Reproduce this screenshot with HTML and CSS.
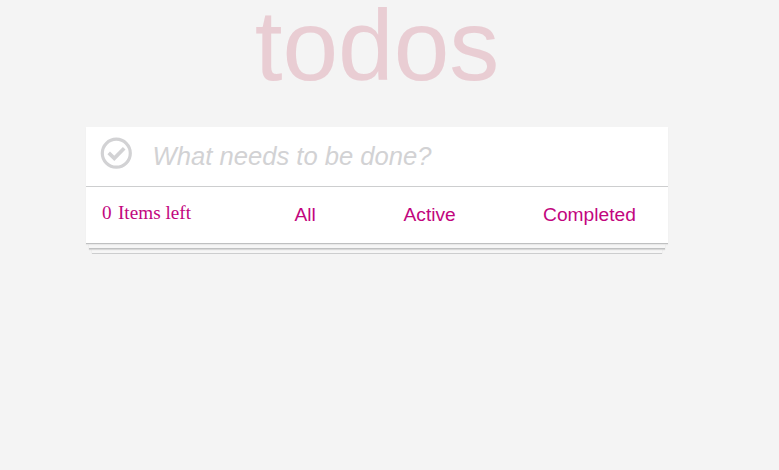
FILE: index.html
```html
<!DOCTYPE html>
<html lang="en">
<head>
<meta charset="utf-8">
<title>todos</title>
<link rel="stylesheet" href="styles.css">
</head>
<body>
<main class="app">
  <h1 class="title">todos</h1>
  <section class="card">
    <div class="entry">
      <svg class="check" viewBox="0 0 32 32" aria-hidden="true"><circle cx="16.3" cy="16.2" r="14"/><path class="tick" d="M8.7 15.9l5.6 5.4L24.2 11.2"/></svg>
      <input class="field" type="text" placeholder="What needs to be done?">
    </div>
    <footer class="filters">
      <span class="count"><span>0</span><span>Items left</span></span>
      <a class="all">All</a>
      <a class="active">Active</a>
      <a class="completed">Completed</a>
    </footer>
  </section>
  <div class="sheet"></div>
  <div class="sheet sheet-last"></div>
</main>
</body>
</html>
```

FILE: styles.css
```css
* { box-sizing: border-box; }
body { margin: 0; background: #f4f4f4; font-family: "Liberation Sans", Arial, sans-serif; }
.app { width: 582px; margin-left: 86px; }
.title { margin: 0; height: 127px; line-height: 90px; font-size: 100px; font-weight: 400; text-align: center; color: #e9cdd3; }
.card { position: relative; z-index: 2; background: #fff; height: 117px; border-bottom: 1px solid #bfc0c1; box-shadow: 0 1px 1px rgba(0,0,0,.05); }
.entry { display: flex; height: 60px; border-bottom: 1px solid #cdcecf; padding-left: 14px; }
.check { width: 32px; height: 32px; margin-top: 10px; fill: none; stroke: #d2d2d4; stroke-width: 3.2; }
.tick { stroke-width: 3.7; }
.field { flex: 1; min-width: 0; border: 0; outline: 0; padding: 0; margin-left: 20.6px; background: none; font: italic 25.6px "Liberation Sans", Arial, sans-serif; }
.field::placeholder { color: #d2d2d4; opacity: 1; }
.filters { display: flex; height: 56px; line-height: 56px; font-size: 19.2px; color: #c2067e; }
.count { display: flex; gap: 6.4px; width: 192.5px; margin-left: 16px; line-height: 52px; font-family: "Liberation Serif", serif; }
.all { width: 109px; }
.active { width: 139.6px; }
.sheet { position: relative; z-index: 1; height: 5px; margin: 0 3px; border-bottom: 1px solid #c0c1c2; background: #f6f6f6; box-shadow: 0 1px 1px rgba(0,0,0,.12); }
.sheet-last { z-index: 0; margin: 0 6px; border-bottom-color: #cccdce; }
```
